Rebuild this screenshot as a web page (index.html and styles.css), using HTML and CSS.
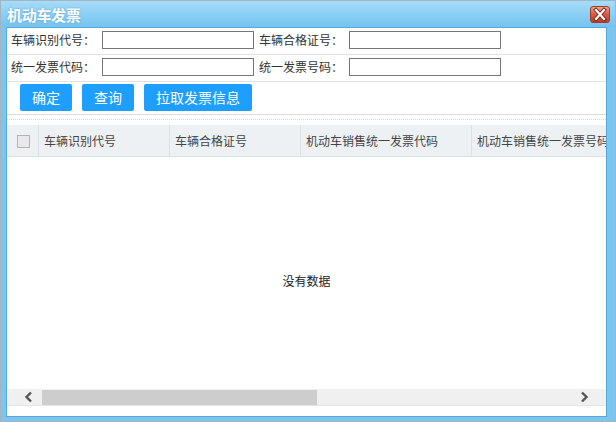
FILE: index.html
```html
<!DOCTYPE html>
<html lang="zh-CN">
<head>
<meta charset="utf-8">
<title>机动车发票</title>
<link rel="stylesheet" href="styles.css">
</head>
<body>
<div class="window">
  <div class="titlebar">
    <span class="title">机动车发票</span>
    <span class="close">
      <svg width="20" height="17" viewBox="0 0 20 17">
        <path d="M6 4 L14 13 M14 4 L6 13" stroke="#7a1f12" stroke-width="4" stroke-linecap="square"/>
        <path d="M6 4 L14 13 M14 4 L6 13" stroke="#ffffff" stroke-width="2.2" stroke-linecap="square"/>
      </svg>
    </span>
  </div>
  <div class="content">
    <div class="form-row">
      <label class="lbl">车辆识别代号：</label>
      <input class="inp" type="text">
      <label class="lbl lbl2">车辆合格证号：</label>
      <input class="inp" type="text">
    </div>
    <div class="form-row">
      <label class="lbl">统一发票代码：</label>
      <input class="inp" type="text">
      <label class="lbl lbl2">统一发票号码：</label>
      <input class="inp" type="text">
    </div>
    <div class="btn-row">
      <button class="btn">确定</button>
      <button class="btn">查询</button>
      <button class="btn">拉取发票信息</button>
    </div>
    <div class="dotted"></div>
    <div class="grid">
      <div class="grid-head">
        <div class="cell cell-check"><span class="checkbox"></span></div>
        <div class="cell c2">车辆识别代号</div>
        <div class="cell c3">车辆合格证号</div>
        <div class="cell c4">机动车销售统一发票代码</div>
        <div class="cell c5">机动车销售统一发票号码</div>
      </div>
      <div class="grid-body">没有数据</div>
      <div class="hscroll">
        <span class="arrow">
          <svg width="10" height="12" viewBox="0 0 10 12"><path d="M7 1.5 L2.5 6 L7 10.5" fill="none" stroke="#555" stroke-width="2.4"/></svg>
        </span>
        <div class="track"><div class="thumb"></div></div>
        <span class="arrow">
          <svg width="10" height="12" viewBox="0 0 10 12"><path d="M3 1.5 L7.5 6 L3 10.5" fill="none" stroke="#555" stroke-width="2.4"/></svg>
        </span>
      </div>
    </div>
  </div>
</div>
</body>
</html>
```

FILE: styles.css
```css
* { box-sizing: border-box; }
html, body {
  margin: 0;
  padding: 0;
  background: #ffffff;
}
body {
  font-family: "Noto Sans CJK SC", "Liberation Sans", sans-serif;
  font-size: 12px;
  color: #333;
}
.window {
  width: 616px;
  height: 422px;
  border: 1px solid #a3b5c4;
  background: #7cc5ee;
  padding: 0 8px 4px 5px;
  display: flex;
  flex-direction: column;
}
.titlebar {
  height: 26px;
  margin: 0 -8px 0 -5px;
  padding: 0 5px 0 6px;
  background: linear-gradient(#a6dcf8, #8fd1f5 45%, #74c3ee);
  display: flex;
  align-items: center;
  justify-content: space-between;
}
.title {
  color: #ffffff;
  font-size: 15px;
  font-weight: bold;
  letter-spacing: -0.3px;
  line-height: 20px;
  text-shadow: 0 0 2px rgba(60, 120, 170, 0.6);
  margin-top: 1px;
}
.close {
  width: 20px;
  height: 17px;
  margin-top: 1px;
  border: 1px solid #a8392a;
  border-radius: 3px;
  background: linear-gradient(#eea08f, #d65a45 50%, #c03a26);
  display: flex;
  align-items: center;
  justify-content: center;
  overflow: hidden;
}
.close svg { display: block; margin: -1px; }
.content {
  flex: 1;
  background: #ffffff;
  border: 1px solid #55a9dd;
  display: flex;
  flex-direction: column;
  overflow: hidden;
}
.form-row {
  height: 27px;
  border-bottom: 1px solid #e2e2e2;
  display: flex;
  align-items: flex-start;
  padding: 3px 0 0 4px;
}
.lbl {
  width: 91px;
  line-height: 18px;
  white-space: nowrap;
}
.lbl2 {
  margin-left: 5px;
  width: 90px;
}
.inp {
  width: 152px;
  height: 18px;
  border: 1px solid #767676;
  margin: 0;
  padding: 0 2px;
  font: inherit;
  background: #fff;
}
.btn-row {
  height: 33px;
  border-bottom: 1px solid #dcdcdc;
  display: flex;
  gap: 10px;
  padding: 2px 0 0 13px;
  align-items: flex-start;
}
.btn {
  height: 27px;
  padding: 0 12px;
  border: none;
  border-radius: 2px;
  background: #1e9fff;
  color: #ffffff;
  font-family: "Noto Sans CJK SC", sans-serif;
  font-size: 14px;
  line-height: 27px;
}
.dotted {
  margin-top: 4px;
  height: 1px;
  border-top: 1px dotted #cfd6dc;
}
.grid {
  margin-top: 5px;
  flex: 1;
  display: flex;
  flex-direction: column;
  overflow: hidden;
}
.grid-head {
  height: 32px;
  background: #eef1f4;
  border-bottom: 1px solid #dde1e6;
  display: flex;
  white-space: nowrap;
  flex-shrink: 0;
  overflow: hidden;
}
.cell {
  height: 31px;
  line-height: 31px;
  padding-left: 5px;
  border-right: 1px solid #dde1e6;
  flex-shrink: 0;
  color: #444;
}
.cell-check {
  width: 32px;
  padding-left: 10px;
  display: flex;
  align-items: center;
}
.checkbox {
  width: 13px;
  height: 13px;
  border: 1px solid #b4b4b4;
  background: #e9e9e9;
  margin-top: 1px;
}
.c2 { width: 131px; }
.c3 { width: 131px; }
.c4 { width: 171px; }
.c5 { width: 171px; }
.grid-body {
  flex: 1;
  display: flex;
  align-items: center;
  justify-content: center;
  padding-top: 15px;
  color: #222;
}
.hscroll {
  height: 17px;
  background: #f0f0f0;
  border-bottom: 1px solid #e4e4e4;
  display: flex;
  align-items: center;
  margin-bottom: 10px;
  flex-shrink: 0;
}
.arrow {
  width: 35px;
  height: 17px;
  display: flex;
  align-items: center;
}
.arrow:first-child { justify-content: flex-end; padding-right: 8px; }
.arrow:last-child { justify-content: flex-start; padding-left: 8px; }
.track {
  flex: 1;
  height: 15px;
}
.thumb {
  width: 275px;
  height: 15px;
  background: #cdcdcd;
}
```
